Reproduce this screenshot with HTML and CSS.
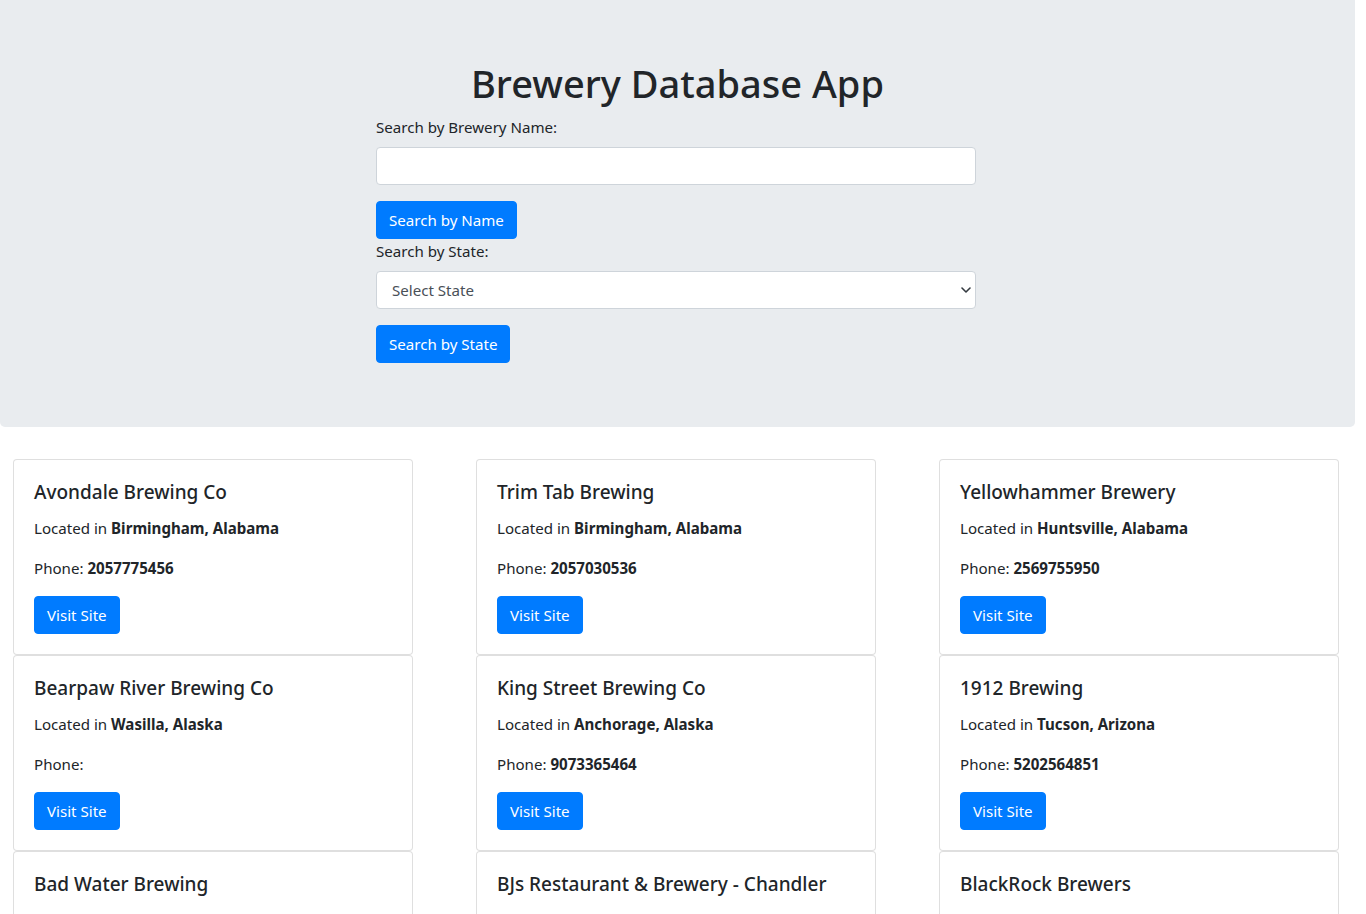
FILE: index.html
```html
<!DOCTYPE html>
<html lang="en">
<head>
<meta charset="utf-8">
<title>Brewery Database App</title>
<link rel="stylesheet" href="styles.css">
</head>
<body>
<div class="page">
  <header class="jumbotron">
    <h1 class="title">Brewery Database App</h1>
    <div class="search">
      <div class="form-group">
        <label class="label" for="name">Search by Brewery Name:</label>
        <input class="control" id="name" type="text">
      </div>
      <button class="btn">Search by Name</button>
      <div class="form-group">
        <label class="label" for="state">Search by State:</label>
        <div class="select-wrap">
          <select class="control select" id="state">
            <option>Select State</option>
          </select>
          <svg class="chevron" width="10" height="6" viewBox="0 0 10 6"><path d="M1 1l4 4 4-4" fill="none" stroke="#343a40" stroke-width="1.6" stroke-linecap="round" stroke-linejoin="round"/></svg>
        </div>
      </div>
      <button class="btn">Search by State</button>
    </div>
  </header>

  <main class="cards">
    <div class="card"><h5 class="card-title">Avondale Brewing Co</h5><p>Located in <b>Birmingham, Alabama</b></p><p>Phone: <b>2057775456</b></p><a class="btn">Visit Site</a></div>
    <div class="card"><h5 class="card-title">Trim Tab Brewing</h5><p>Located in <b>Birmingham, Alabama</b></p><p>Phone: <b>2057030536</b></p><a class="btn">Visit Site</a></div>
    <div class="card"><h5 class="card-title">Yellowhammer Brewery</h5><p>Located in <b>Huntsville, Alabama</b></p><p>Phone: <b>2569755950</b></p><a class="btn">Visit Site</a></div>
    <div class="card"><h5 class="card-title">Bearpaw River Brewing Co</h5><p>Located in <b>Wasilla, Alaska</b></p><p>Phone: <b></b></p><a class="btn">Visit Site</a></div>
    <div class="card"><h5 class="card-title">King Street Brewing Co</h5><p>Located in <b>Anchorage, Alaska</b></p><p>Phone: <b>9073365464</b></p><a class="btn">Visit Site</a></div>
    <div class="card"><h5 class="card-title">1912 Brewing</h5><p>Located in <b>Tucson, Arizona</b></p><p>Phone: <b>5202564851</b></p><a class="btn">Visit Site</a></div>
    <div class="card"><h5 class="card-title">Bad Water Brewing</h5><p>Located in <b>Scottsdale, Arizona</b></p><p>Phone: <b>4803610300</b></p><a class="btn">Visit Site</a></div>
    <div class="card"><h5 class="card-title">BJs Restaurant &amp; Brewery - Chandler</h5><p>Located in <b>Chandler, Arizona</b></p><p>Phone: <b>4809170631</b></p><a class="btn">Visit Site</a></div>
    <div class="card"><h5 class="card-title">BlackRock Brewers</h5><p>Located in <b>Tucson, Arizona</b></p><p>Phone: <b>5206232337</b></p><a class="btn">Visit Site</a></div>
  </main>
</div>
</body>
</html>
```

FILE: styles.css
```css
html, body {
  margin: 0;
  padding: 0;
  background: #fff;
}
body {
  font-family: "Noto Sans", "Open Sans", sans-serif;
  font-size: 15.1px;
  line-height: 24px;
  color: #212529;
  overflow: hidden;
}
.page {
  width: 1355px;
}
.jumbotron {
  background: #e9ecef;
  border-radius: 0 0 5px 5px;
  padding: 59px 0 64px;
  margin-bottom: 32px;
}
.title {
  margin: 0 0 8px;
  text-align: center;
  font-size: 38px;
  line-height: 48px;
  font-weight: 500;
}
.search {
  width: 600px;
  margin-left: 376px;
}
.form-group {
  margin-bottom: 16px;
}
.label {
  display: block;
  margin-bottom: 8px;
  line-height: 24px;
}
.control {
  display: block;
  box-sizing: border-box;
  width: 100%;
  height: 38px;
  padding: 6px 12px;
  font: inherit;
  color: #495057;
  background: #fff;
  border: 1px solid #ced4da;
  border-radius: 4px;
  outline: none;
}
.select-wrap {
  position: relative;
}
.select {
  appearance: none;
  -webkit-appearance: none;
  padding-left: 15px;
}
.chevron {
  position: absolute;
  right: 5px;
  top: 16px;
}
.btn {
  display: inline-block;
  box-sizing: border-box;
  height: 38px;
  padding: 6px 12px;
  font: inherit;
  line-height: 24px;
  color: #fff;
  background: #007bff;
  border: 1px solid #007bff;
  border-radius: 4px;
  text-decoration: none;
  cursor: pointer;
}
.cards {
  display: grid;
  grid-template-columns: repeat(3, 400px);
  column-gap: 63px;
  padding-left: 13px;
}
.card {
  box-sizing: border-box;
  border: 1px solid rgba(0, 0, 0, 0.125);
  border-radius: 4px;
  padding: 20px;
  background: #fff;
}
.card-title {
  margin: 0 0 12px;
  font-size: 19px;
  line-height: 24px;
  font-weight: 500;
}
.card p {
  margin: 0 0 16px;
}
.card b {
  font-weight: 700;
}
```
